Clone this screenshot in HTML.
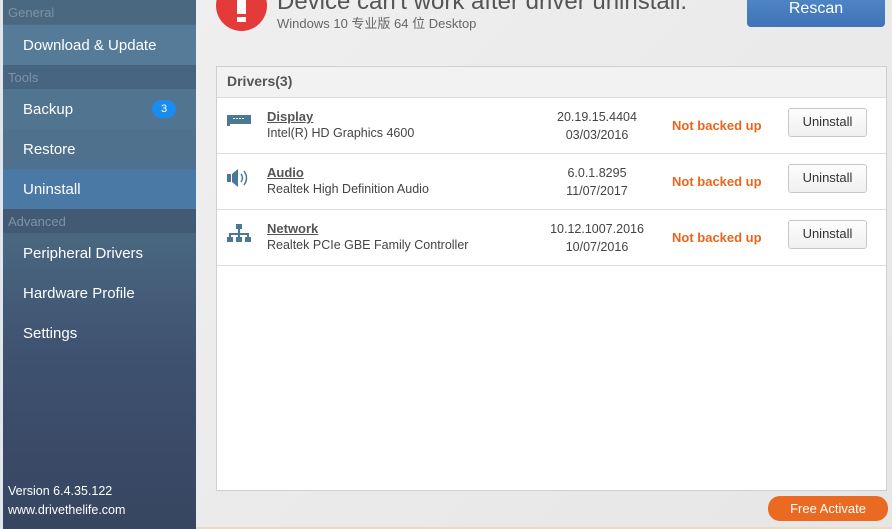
<!DOCTYPE html>
<html><head><meta charset="utf-8"><style>
*{margin:0;padding:0;box-sizing:border-box}
body{width:892px;height:529px;overflow:hidden;background:#e9e9e9;font-family:"Liberation Sans","Noto Sans CJK SC",sans-serif;position:relative}
.side{position:absolute;left:3px;top:0;width:193px;height:529px;background:linear-gradient(#4d6f89 0px,#49667f 240px,#3e5170 360px,#37455f 529px)}
.edge{position:absolute;left:0;top:0;width:3px;height:529px;background:#dfe6ec}
.sec{position:absolute;left:0;width:193px;height:24px;color:#7d93a6;font-size:13px;padding:5px 0 0 5px}
.it{position:absolute;left:0;width:193px;height:40px;color:#fff;font-size:15px;padding:12px 0 0 20px}
.badge{position:absolute;left:152px;top:100px;width:24px;height:18px;border-radius:9px;background:#1a8cf0;color:#fff;font-size:11px;text-align:center;line-height:18px}
.main{position:absolute;left:196px;top:0;width:696px;height:529px;background:linear-gradient(135deg,#efefef,#e6e6e6)}
.panel{position:absolute;left:216px;top:66px;width:671px;height:425px;background:#fff;border:1px solid #cfcfcf}
.ph{height:31px;background:#f2f2f2;border-bottom:1px solid #dcdcdc;font-weight:bold;color:#555;font-size:14px;padding:6px 0 0 10px}
.row{position:relative;height:56px;border-bottom:1px solid #dedede}
.nm{position:absolute;left:50px;top:11px;font-size:13px;font-weight:bold;color:#555;text-decoration:underline}
.ds{position:absolute;left:50px;top:28px;font-size:12.5px;color:#444}
.ver{position:absolute;left:310px;width:140px;text-align:center;top:10px;font-size:12.5px;color:#444;line-height:18px}
.st{position:absolute;left:455px;top:20px;font-size:13px;font-weight:bold;color:#e8661c}
.btn{position:absolute;left:571px;top:10px;width:79px;height:29px;border:1px solid #c8c8c8;border-radius:3px;background:linear-gradient(#fdfdfd,#f0f0f0);font-size:13px;color:#333;text-align:center;line-height:25px}
.ic{position:absolute;left:10px;top:14px}
</style></head><body>
<div class="main"></div>
<div class="side">
<div class="sec" style="top:0;background:#4a6880">General</div>
<div class="it" style="top:25px;background:#557b98">Download &amp; Update</div>
<div class="sec" style="top:65px;background:#476580">Tools</div>
<div class="it" style="top:89px;background:#517491">Backup</div>
<div class="it" style="top:129px;background:#4f718e">Restore</div>
<div class="it" style="top:169px;background:#4a79a5">Uninstall</div>
<div class="sec" style="top:209px;background:#435a74">Advanced</div>
<div class="it" style="top:233px">Peripheral Drivers</div>
<div class="it" style="top:273px">Hardware Profile</div>
<div class="it" style="top:313px">Settings</div>
<div style="position:absolute;left:5px;top:482px;color:#fff;font-size:12.5px;line-height:19px">Version 6.4.35.122<br>www.drivethelife.com</div>
</div>
<div class="edge"></div>
<div class="badge">3</div>
<div style="position:absolute;left:216px;top:-20px;width:51px;height:51px;border-radius:50%;background:#e43a3a"></div>
<div style="position:absolute;left:237px;top:0;width:9px;height:14px;background:#fff"></div>
<div style="position:absolute;left:237px;top:17px;width:9px;height:5px;background:#fff"></div>
<div style="position:absolute;left:277px;top:-12px;font-size:24px;color:#555;white-space:nowrap">Device can't work after driver uninstall.</div>
<div style="position:absolute;left:277px;top:13px;font-size:13px;color:#666">Windows 10 专业版 64 位 Desktop</div>
<div style="position:absolute;left:747px;top:-6px;width:138px;height:33px;border-radius:4px;background:linear-gradient(#5088c8,#3f74b6);color:#fff;font-size:16px;text-align:center;line-height:29px">Rescan</div>
<div class="panel">
<div class="ph">Drivers(3)</div>
<div class="row"><svg class="ic" width="26" height="14"><rect x="0" y="3" width="24" height="9" fill="#4a7896"/><rect x="0" y="12" width="3" height="2" fill="#4a7896"/><g fill="#fff"><rect x="6" y="6" width="2" height="1"/><rect x="9" y="6" width="2" height="1"/><rect x="12" y="6" width="2" height="1"/><rect x="15" y="6" width="2" height="1"/></g></svg>
<div class="nm">Display</div><div class="ds">Intel(R) HD Graphics 4600</div><div class="ver">20.19.15.4404<br>03/03/2016</div><div class="st">Not backed up</div><div class="btn">Uninstall</div></div>
<div class="row"><svg class="ic" width="26" height="20" style="top:15px"><rect x="0" y="5" width="4" height="8" fill="#4a7896"/><path d="M5 5 L11 0 L11 18 L5 13Z" fill="#4a7896"/><path d="M14 5 Q17 9 14 13 M17 2 Q22 9 17 16" stroke="#4a7896" stroke-width="1.5" fill="none"/></svg>
<div class="nm">Audio</div><div class="ds">Realtek High Definition Audio</div><div class="ver">6.0.1.8295<br>11/07/2017</div><div class="st">Not backed up</div><div class="btn">Uninstall</div></div>
<div class="row"><svg class="ic" width="26" height="20" style="top:14px"><g fill="#4a7896"><rect x="9" y="0" width="6" height="5"/><rect x="11" y="5" width="2" height="4"/><rect x="2" y="9" width="20" height="2"/><rect x="2" y="9" width="2" height="4"/><rect x="11" y="9" width="2" height="4"/><rect x="20" y="9" width="2" height="4"/><rect x="0" y="13" width="6" height="5"/><rect x="9" y="13" width="6" height="5"/><rect x="18" y="13" width="6" height="5"/></g></svg>
<div class="nm">Network</div><div class="ds">Realtek PCIe GBE Family Controller</div><div class="ver">10.12.1007.2016<br>10/07/2016</div><div class="st">Not backed up</div><div class="btn">Uninstall</div></div>
</div>
<div style="position:absolute;left:768px;top:496px;width:120px;height:25px;border-radius:12px;background:#ea6a22;color:#fff;font-size:13px;text-align:center;line-height:25px">Free Activate</div>
<div style="position:absolute;left:196px;top:527px;width:696px;height:2px;background:#e8dcc8"></div>
</body></html>
